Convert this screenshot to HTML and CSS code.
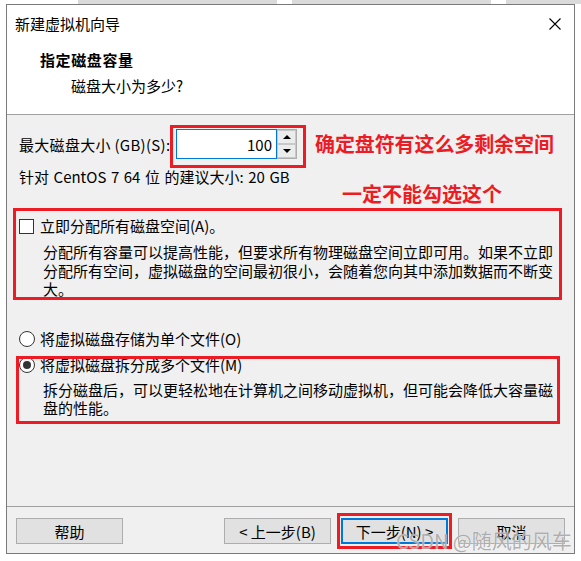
FILE: index.html
```html
<!DOCTYPE html>
<html lang="zh-CN">
<head>
    <meta charset="UTF-8">
    <meta name="viewport" content="width=device-width, initial-scale=1.0">
    <title>新建虚拟机向导</title>
    <link rel="stylesheet" href="styles.css">
</head>
<body>

<div class="backdrop">
    <span class="bar bar-1"></span>
    <span class="bar bar-2"></span>
    <span class="bar bar-3"></span>
</div>

<div class="wizard">
    <header class="wizard-head">
        <div class="titlebar">
            <span class="title">新建虚拟机向导</span>
            <svg class="close" width="12" height="12" viewBox="0 0 12 12">
                <path d="M0.5 0.5 L11.5 11.5 M11.5 0.5 L0.5 11.5" stroke="#000" stroke-width="1.1" fill="none"/>
            </svg>
        </div>
        <h1 class="step-title">指定磁盘容量</h1>
        <p class="step-sub">磁盘大小为多少?</p>
    </header>

    <div class="wizard-body">
        <div class="size-row">
            <label class="size-label" for="size">最大磁盘大小 (GB)(S):</label>
            <div class="spin">
                <input id="size" class="spin-input" type="text" value="100">
                <div class="spin-btns">
                    <span class="spin-btn"><i class="tri tri-up"></i></span>
                    <span class="spin-btn"><i class="tri tri-down"></i></span>
                </div>
                <span class="mark mark-spin"></span>
            </div>
            <span class="note note-space">确定盘符有这么多剩余空间</span>
        </div>

        <p class="recommend">针对 CentOS 7 64 位 的建议大小: 20 GB</p>
        <p class="note note-warn">一定不能勾选这个</p>

        <div class="option option-alloc">
            <div class="option-row">
                <span class="checkbox"></span>
                <span>立即分配所有磁盘空间(A)。</span>
            </div>
            <p class="desc">分配所有容量可以提高性能，但要求所有物理磁盘空间立即可用。如果不立即<br>分配所有空间，虚拟磁盘的空间最初很小，会随着您向其中添加数据而不断变<br>大。</p>
            <span class="mark mark-alloc"></span>
        </div>

        <div class="option option-single">
            <div class="option-row">
                <span class="radio"></span>
                <span>将虚拟磁盘存储为单个文件(O)</span>
            </div>
        </div>

        <div class="option option-split">
            <div class="option-row">
                <span class="radio checked"></span>
                <span>将虚拟磁盘拆分成多个文件(M)</span>
            </div>
            <p class="desc">拆分磁盘后，可以更轻松地在计算机之间移动虚拟机，但可能会降低大容量磁<br>盘的性能。</p>
            <span class="mark mark-split"></span>
        </div>
    </div>

    <footer class="wizard-foot">
        <button class="btn">帮助</button>
        <div class="nav-btns">
            <button class="btn">&lt; 上一步(B)</button>
            <div class="next-wrap">
                <button class="btn btn-focus">下一步(N) &gt;</button>
                <span class="mark mark-next"></span>
            </div>
            <button class="btn">取消</button>
        </div>
    </footer>

    <span class="watermark">CSDN @随风的风车</span>
</div>

</body>
</html>
```

FILE: styles.css
```css
* {
    margin: 0;
    padding: 0;
    box-sizing: border-box;
}

body {
    background: #fff;
    font-family: "Noto Sans CJK SC", "Noto Sans", sans-serif;
    font-size: 15px;
    color: #000;
}

.backdrop {
    display: flex;
    height: 4px;
}

.bar {
    height: 4px;
    background: #dadada;
}

.bar-1 {
    margin-left: 78px;
    width: 199px;
}

.bar-2 {
    margin-left: 15px;
    width: 199px;
}

.bar-3 {
    margin-left: 15px;
    flex: 1;
}

.wizard {
    position: relative;
    margin-left: 6px;
    width: 569px;
    height: 550px;
    border: 1px solid #7a7a7a;
    display: flex;
    flex-direction: column;
}

/* header */

.wizard-head {
    height: 110px;
    background: #fff;
    border-bottom: 1px solid #a0a0a0;
    padding: 9px 0 0 8px;
}

.titlebar {
    display: flex;
    justify-content: space-between;
    align-items: center;
    height: 20px;
    line-height: 20px;
    padding-right: 13px;
}

.close {
    margin-top: -1px;
}

.step-title {
    margin: 16px 0 0 25px;
    font-size: 15px;
    font-weight: bold;
    line-height: 20px;
    letter-spacing: 0.6px;
}

.step-sub {
    margin: 6px 0 0 56px;
    line-height: 20px;
}

/* body */

.wizard-body {
    flex: 1;
    background: #f0f0f0;
    padding-left: 12px;
}

.size-row {
    display: flex;
    align-items: center;
    height: 30px;
    margin-top: 14px;
}

.size-label {
    width: 157px;
    flex-shrink: 0;
    white-space: nowrap;
    letter-spacing: 0.3px;
}

.spin {
    position: relative;
    display: flex;
    height: 30px;
}

.spin-input {
    width: 101px;
    height: 30px;
    border: 1px solid #0078d7;
    background: #fff;
    font-family: inherit;
    font-size: 15px;
    text-align: right;
    padding-right: 4px;
    outline: none;
}

.spin-btns {
    display: flex;
    flex-direction: column;
    width: 20px;
    height: 30px;
    border: 1px solid #adadad;
    border-left: none;
    background: #f0f0f0;
}

.spin-btn {
    flex: 1;
    display: flex;
    align-items: center;
    justify-content: center;
    border: 1px solid #c8c8c8;
    background: #ececec;
}

.tri {
    width: 0;
    height: 0;
    border-left: 4px solid transparent;
    border-right: 4px solid transparent;
}

.tri-up {
    border-bottom: 4px solid #000;
}

.tri-down {
    border-top: 4px solid #000;
}

.note {
    color: #ed1c24;
    font-weight: bold;
    font-size: 20px;
    white-space: nowrap;
}

.note-space {
    margin-left: 18px;
    line-height: 30px;
    letter-spacing: -0.1px;
}

.recommend {
    margin-top: 8px;
    line-height: 20px;
    word-spacing: 1.2px;
}

.note-warn {
    margin: -3px 0 0 323px;
    line-height: 20px;
}

.option {
    position: relative;
}

.option-alloc {
    margin-top: 12px;
}

.option-single {
    margin-top: 30px;
}

.option-split {
    margin-top: 6px;
}

.option-row {
    display: flex;
    align-items: center;
    height: 20px;
    line-height: 20px;
}

.checkbox {
    width: 15px;
    height: 15px;
    margin-right: 6px;
    border: 1px solid #333;
    background: #fff;
}

.radio {
    width: 16px;
    height: 16px;
    margin-right: 5px;
    border: 1px solid #333;
    border-radius: 50%;
    background: #fff;
    display: flex;
    align-items: center;
    justify-content: center;
}

.radio.checked::after {
    content: "";
    width: 8px;
    height: 8px;
    border-radius: 50%;
    background: #333;
}

.desc {
    margin-top: 7px;
    padding-left: 24px;
    line-height: 18.5px;
    white-space: nowrap;
}

.option-split .desc {
    margin-top: 6px;
}

/* red annotation frames drawn over the dialog */

.mark {
    position: absolute;
    border: 3px solid #ed1c24;
    pointer-events: none;
}

.mark-spin {
    left: -6px;
    top: -4px;
    width: 136px;
    height: 43px;
}

.mark-alloc {
    left: -6px;
    top: -8px;
    width: 549px;
    height: 92px;
}

.mark-split {
    left: -3px;
    top: 1px;
    width: 544px;
    height: 68px;
}

/* footer */

.wizard-foot {
    height: 47px;
    border-top: 1px solid #a0a0a0;
    background: #f0f0f0;
    display: flex;
    align-items: flex-start;
    justify-content: space-between;
    padding: 11px 9px 0 9px;
}

.nav-btns {
    display: flex;
    align-items: flex-start;
    gap: 10px;
}

.btn {
    width: 107px;
    height: 26px;
    border: 1px solid #adadad;
    background: #e1e1e1;
    font-family: inherit;
    font-size: 15px;
    color: #000;
}

.btn-focus {
    border: 2px solid #0078d7;
}

.next-wrap {
    position: relative;
    height: 26px;
}

.mark-next {
    left: -4px;
    top: -5px;
    right: -4px;
    bottom: -5px;
}

.watermark {
    position: absolute;
    left: 389px;
    top: 524px;
    font-size: 20px;
    line-height: 24px;
    color: rgba(140, 140, 140, 0.7);
    text-shadow: 0 0 1px #fff;
    white-space: nowrap;
}
```
